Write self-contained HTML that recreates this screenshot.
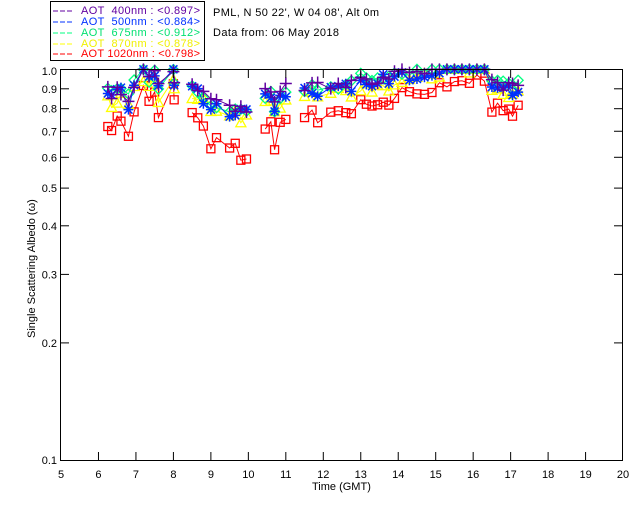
<!DOCTYPE html>
<html><head><meta charset="utf-8"><style>
body{margin:0;background:#fff;width:640px;height:512px;overflow:hidden}
svg{display:block}
text{font-family:"Liberation Sans",sans-serif;font-size:11px}
</style></head><body>
<svg id="s" width="640" height="512" xmlns="http://www.w3.org/2000/svg">
<rect x="50.5" y="1.5" width="154" height="59" fill="none" stroke="#000"/>
<g font-size="11">
<line x1="53" y1="11" x2="74" y2="11" stroke="#6000a0" stroke-dasharray="5,2"/><text x="81" y="14" fill="#6000a0" textLength="119" xml:space="preserve">AOT  400nm : &lt;0.897&gt;</text>
<line x1="53" y1="22" x2="74" y2="22" stroke="#0030ff" stroke-dasharray="5,2"/><text x="81" y="25" fill="#0030ff" textLength="119" xml:space="preserve">AOT  500nm : &lt;0.884&gt;</text>
<line x1="53" y1="33" x2="74" y2="33" stroke="#00ff80" stroke-dasharray="5,2"/><text x="81" y="36" fill="#00e070" textLength="119" xml:space="preserve">AOT  675nm : &lt;0.912&gt;</text>
<line x1="53" y1="44" x2="74" y2="44" stroke="#ffff00" stroke-dasharray="5,2"/><text x="81" y="47" fill="#f0f000" textLength="119" xml:space="preserve">AOT  870nm : &lt;0.878&gt;</text>
<line x1="53" y1="54" x2="74" y2="54" stroke="#ff0000" stroke-dasharray="5,2"/><text x="81" y="57" fill="#ff0000" textLength="119" xml:space="preserve">AOT 1020nm : &lt;0.798&gt;</text>
</g>
<text x="213" y="16" textLength="166">PML, N 50 22', W 04 08', Alt 0m</text>
<text x="213" y="36" textLength="126">Data from: 06 May 2018</text>
<g id="plot"></g>
<rect x="60.5" y="69.5" width="562" height="391" fill="none" stroke="#000"/>
<g id="ax" stroke="#000"></g>
<g id="lab"></g>
<text x="312" y="490">Time (GMT)</text>
<text transform="translate(35,338) rotate(-90)">Single Scattering Albedo (ω)</text>
</svg>
<script>
const X=t=>61+(t-5)*37.47, Y=v=>460-389*(1+Math.log10(v));
const ns="http://www.w3.org/2000/svg";
let ax=document.getElementById('ax'),lab=document.getElementById('lab'),pl=document.getElementById('plot');
function el(p,n,a,tx){let e=document.createElementNS(ns,n);for(let k in a)e.setAttribute(k,a[k]);if(tx)e.textContent=tx;p.appendChild(e);return e}
for(let t=5;t<=20;t++){let x=X(t);
 if(t>5&&t<20){el(ax,'line',{x1:x,y1:460,x2:x,y2:452});el(ax,'line',{x1:x,y1:70,x2:x,y2:78});}
 el(lab,'text',{x:x,y:478,'text-anchor':'middle'},''+t);}
[1,.9,.8,.7,.6,.5,.4,.3,.2,.1].forEach(v=>{let y=Y(v);
 if(v<1&&v>.1){el(ax,'line',{x1:61,y1:y,x2:69,y2:y});el(ax,'line',{x1:622,y1:y,x2:614,y2:y});}
 el(lab,'text',{x:57,y:y+4,'text-anchor':'end'},v==1?'1.0':''+v);});
const red=[[6.25,.73],[6.35,.72],[6.5,.74],[6.6,.75],[6.8,.67],[6.95,.80],[7.2,.89],[7.35,.84],[7.5,.89],[7.6,.76],[8.0,.90],[8.02,.83],[8.5,.79],[8.65,.75],[8.8,.71],[9.0,.66],[9.15,.65],[9.5,.62],[9.65,.63],[9.8,.61],[9.95,.61],[10.45,.72],[10.6,.72],[10.7,.62],[10.85,.72],[11.0,.76],[11.5,.77],[11.7,.78],[11.85,.76],[12.2,.77],[12.4,.79],[12.6,.78],[12.75,.79],[13.0,.84],[13.15,.85],[13.3,.82],[13.45,.83],[13.6,.86],[13.75,.82],[13.9,.87],[14.1,.88],[14.3,.86],[14.5,.87],[14.7,.89],[14.9,.90],[15.1,.91],[15.3,.93],[15.5,.93],[15.7,.94],[15.9,.94],[16.1,.96],[16.3,.97],[16.5,.81],[16.65,.80],[16.8,.78],[16.95,.78],[17.05,.76],[17.2,.79]];
const ser=[["#ff0000",0,"sq"],["#ffff00",.07,"tri"],["#00ff80",.12,"dia"],["#0030ff",.1,"star"],["#6000a0",.12,"plus"]];
let seed=3;const rnd=()=>{seed=(seed*9301+49297)%233280;return seed/233280};
ser.forEach(([c,off,m],si)=>{
 let pts=red.map(([t,v])=>[t,Math.min(1.01,v+off+(rnd()-.5)*.06+(si?Math.max(0,(0.85-v))*0.3:0))]);
 let segs=[[]];pts.forEach((p,i)=>{if(i&&p[0]-pts[i-1][0]>.45)segs.push([]);segs[segs.length-1].push(p)});
 segs.forEach(s=>el(pl,'polyline',{points:s.map(p=>X(p[0])+','+Y(p[1])).join(' '),fill:'none',stroke:c,'stroke-width':1}));
 pts.forEach(([t,v])=>{let x=X(t),y=Y(v);
  if(m=="sq")el(pl,'rect',{x:x-4,y:y-4,width:8,height:8,fill:'none',stroke:c,'stroke-width':1.3});
  else if(m=="tri")el(pl,'polygon',{points:`${x},${y-5} ${x-5},${y+4} ${x+5},${y+4}`,fill:'none',stroke:c,'stroke-width':1.3});
  else if(m=="dia")el(pl,'polygon',{points:`${x},${y-5} ${x+5},${y} ${x},${y+5} ${x-5},${y}`,fill:'none',stroke:c,'stroke-width':1.3});
  else if(m=="star")el(pl,'path',{d:`M${x-5} ${y}H${x+5}M${x} ${y-5}V${y+5}M${x-4} ${y-4}L${x+4} ${y+4}M${x-4} ${y+4}L${x+4} ${y-4}`,stroke:c,'stroke-width':1.5});
  else el(pl,'path',{d:`M${x-6} ${y}H${x+6}M${x} ${y-6}V${y+6}`,stroke:c,'stroke-width':1.5});
 });
});
</script>
</body></html>
